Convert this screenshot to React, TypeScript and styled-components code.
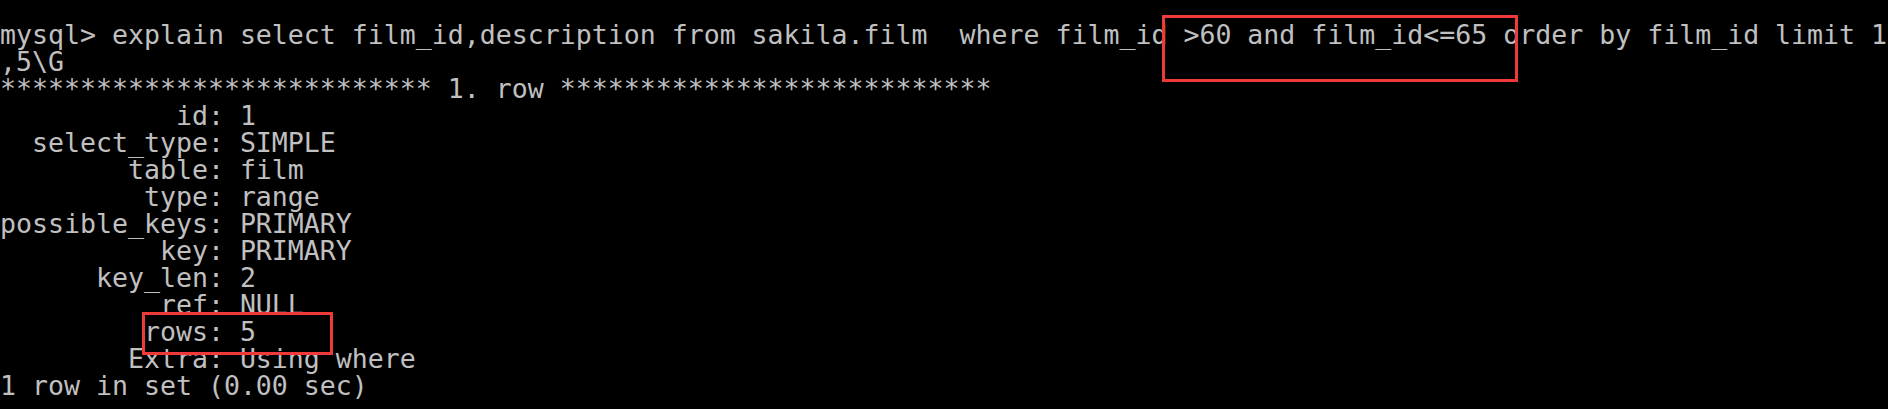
import React from "react";
import styled, { createGlobalStyle } from "styled-components";

const GlobalStyle = createGlobalStyle`
  html, body {
    margin: 0;
    padding: 0;
    background: #000000;
  }
  body {
    width: 1888px;
    height: 409px;
    overflow: hidden;
  }
`;

const Terminal = styled.div`
  position: relative;
  width: 1888px;
  height: 409px;
  box-sizing: border-box;
  padding-top: 21px;
  background: #000000;
  color: #c0c0c0;
  font-family: "DejaVu Sans Mono", "Liberation Mono", monospace;
  font-size: 26.57px;
  line-height: 27px;
  overflow: hidden;
`;

const Line = styled.div`
  height: 27px;
  white-space: pre;
`;

const Highlight = styled.div<{ $left: number; $top: number; $width: number; $height: number }>`
  position: absolute;
  left: ${(p) => p.$left}px;
  top: ${(p) => p.$top}px;
  width: ${(p) => p.$width}px;
  height: ${(p) => p.$height}px;
  box-sizing: border-box;
  border: 3px solid #f03a3a;
  pointer-events: none;
`;

const lines = [
  "mysql> explain select film_id,description from sakila.film  where film_id >60 and film_id<=65 order by film_id limit 1",
  ",5\\G",
  "*************************** 1. row ***************************",
  "           id: 1",
  "  select_type: SIMPLE",
  "        table: film",
  "         type: range",
  "possible_keys: PRIMARY",
  "          key: PRIMARY",
  "      key_len: 2",
  "          ref: NULL",
  "         rows: 5",
  "        Extra: Using where",
  "1 row in set (0.00 sec)",
];

export default function App() {
  return (
    <>
      <GlobalStyle />
      <Terminal>
        {lines.map((l, i) => (
          <Line key={i}>{l}</Line>
        ))}
        <Highlight $left={1162} $top={15} $width={356} $height={67} />
        <Highlight $left={142} $top={312} $width={191} $height={43} />
      </Terminal>
    </>
  );
}
